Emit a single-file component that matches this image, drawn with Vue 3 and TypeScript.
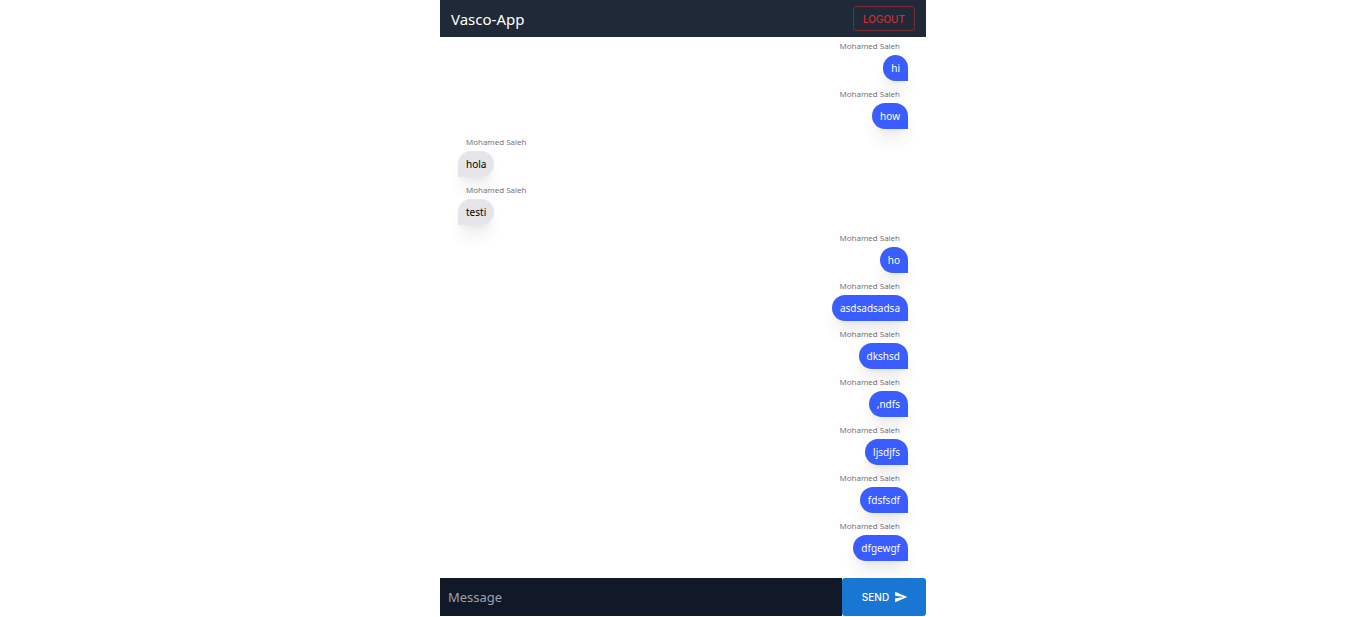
<script setup lang="ts">
import { ref } from 'vue'

interface Message {
  id: number
  name: string
  text: string
  own: boolean
}

const author = 'Mohamed Saleh'
const draft = ref('')
const messages = ref<Message[]>([
  { id: 1, name: author, text: 'hi', own: true },
  { id: 2, name: author, text: 'how', own: true },
  { id: 3, name: author, text: 'hola', own: false },
  { id: 4, name: author, text: 'testi', own: false },
  { id: 5, name: author, text: 'ho', own: true },
  { id: 6, name: author, text: 'asdsadsadsa', own: true },
  { id: 7, name: author, text: 'dkshsd', own: true },
  { id: 8, name: author, text: ',ndfs', own: true },
  { id: 9, name: author, text: 'ljsdjfs', own: true },
  { id: 10, name: author, text: 'fdsfsdf', own: true },
  { id: 11, name: author, text: 'dfgewgf', own: true },
])

function send() {
  const text = draft.value.trim()
  if (!text) return
  messages.value.push({ id: messages.value.length + 1, name: author, text, own: true })
  draft.value = ''
}
</script>

<template>
  <div class="chat">
    <header class="bar">
      <h1 class="title">Vasco-App</h1>
      <button type="button" class="logout">Logout</button>
    </header>
    <main class="messages">
      <article v-for="m in messages" :key="m.id" class="message" :class="{ own: m.own }">
        <span class="name">{{ m.name }}</span>
        <p class="bubble">{{ m.text }}</p>
      </article>
    </main>
    <form class="composer" @submit.prevent="send">
      <input v-model="draft" class="field" type="text" placeholder="Message" aria-label="Message" />
      <button type="submit" class="send">
        Send
        <svg class="icon" viewBox="0 0 24 24" aria-hidden="true">
          <path d="M2.01 21 23 12 2.01 3 2 10l15 2-15 2z" />
        </svg>
      </button>
    </form>
  </div>
</template>

<style>
body {
  margin: 0;
  background: #fff;
}
</style>

<style scoped>
.chat {
  box-sizing: border-box;
  display: flex;
  flex-direction: column;
  max-width: 486px;
  min-height: 100vh;
  margin: 0 auto;
  padding-bottom: 1px;
  font-family: 'Segoe UI', 'Noto Sans', sans-serif;
}

.bar {
  display: flex;
  align-items: center;
  justify-content: space-between;
  box-sizing: border-box;
  height: 37px;
  padding: 0 11px;
  background: #1f2937;
}

.title {
  margin: 0;
  color: #fff;
  font-size: 15px;
  font-weight: 400;
  line-height: 20px;
}

.logout,
.send {
  box-sizing: border-box;
  font-family: Inter, sans-serif;
  font-size: 10px;
  font-weight: 500;
  text-transform: uppercase;
  cursor: pointer;
}

.logout {
  height: 25px;
  padding: 0 9px;
  border: 1px solid #7c2a34;
  border-radius: 3px;
  background: transparent;
  color: #d32f2f;
}

.messages {
  flex: 1;
  display: flex;
  flex-direction: column;
  gap: 7px;
  padding: 3px 18px 16px;
}

.message {
  display: flex;
  flex-direction: column;
  align-items: flex-start;
  gap: 3px;
}

.message.own {
  align-items: flex-end;
}

.name {
  padding: 0 8px;
  color: #6b6b6b;
  font-family: 'Segoe UI', 'Open Sans', sans-serif;
  font-size: 8px;
  line-height: 12px;
}

.bubble {
  margin: 0;
  padding: 5px 8px;
  border-radius: 13px 13px 13px 0;
  background: #e5e5ea;
  color: #000;
  font-size: 10px;
  line-height: 16px;
  box-shadow: 0 13px 17px -3px rgb(0 0 0 / 8%), 0 5px 7px -4px rgb(0 0 0 / 8%);
}

.own .bubble {
  border-radius: 13px 13px 0 13px;
  background: #395dff;
  color: #fff;
}

.composer {
  display: flex;
  height: 38px;
}

.field {
  flex: 1;
  min-width: 0;
  box-sizing: border-box;
  padding: 0 8px;
  border: 0;
  border-radius: 0;
  outline: none;
  background: #111827;
  color: #fff;
  font-family: inherit;
  font-size: 13px;
}

.field::placeholder {
  color: #9ca3af;
  opacity: 1;
}

.send {
  display: flex;
  align-items: center;
  justify-content: center;
  gap: 5px;
  width: 84px;
  padding: 0 0 0 2px;
  border: 0;
  border-radius: 3px;
  background: #1976d2;
  color: #fff;
}

.icon {
  width: 14px;
  height: 14px;
  fill: currentColor;
}
</style>
